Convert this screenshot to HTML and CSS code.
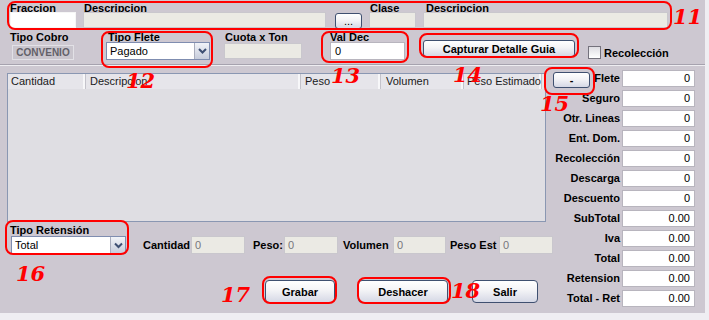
FILE: index.html
```html
<!DOCTYPE html>
<html lang="es">
<head>
  <meta charset="UTF-8">
  <title>Guia - Captura</title>
  <link rel="stylesheet" href="styles.css">
</head>
<body>

<div class="app">
  <!-- datos generales -->
  <div class="head">
    <div class="row-top">
      <div class="field w-fraccion">
        <span class="lbl">Fraccion</span>
        <div class="box plain"></div>
      </div>
      <div class="field w-desc">
        <span class="lbl pad1">Descripcion</span>
        <div class="box off"></div>
      </div>
      <button class="btn btn-dots">...</button>
      <div class="field w-clase">
        <span class="lbl pad1">Clase</span>
        <div class="box off"></div>
      </div>
      <div class="field w-desc2">
        <span class="lbl pad3">Descripcion</span>
        <div class="box off"></div>
      </div>
    </div>

    <div class="row-mid">
      <div class="field w-cobro">
        <span class="lbl">Tipo Cobro</span>
        <div class="cobro">CONVENIO</div>
      </div>
      <div class="field w-flete">
        <span class="lbl pad2">Tipo Flete</span>
        <div class="combo">
          <span class="combo-text">Pagado</span>
          <span class="combo-arrow"><svg width="13" height="14" viewBox="0 0 13 14"><polyline points="3,5 6.5,8.5 10,5" fill="none" stroke="#3d4f73" stroke-width="2"/></svg></span>
        </div>
      </div>
      <div class="field w-cuota">
        <span class="lbl pad1">Cuota x Ton</span>
        <div class="box off"></div>
      </div>
      <div class="field w-valdec">
        <span class="lbl">Val Dec</span>
        <div class="box val-dec">0</div>
      </div>
      <button class="btn btn-capturar">Capturar Detalle Guia</button>
      <label class="check"><span class="check-box"></span>Recolección</label>
    </div>
  </div>

  <div class="main">
    <div class="left">
      <div class="grid">
        <div class="grid-head">
          <span class="c-cant">Cantidad</span>
          <span class="c-desc">Descripcion</span>
          <span class="c-peso">Peso</span>
          <span class="c-vol">Volumen</span>
          <span class="c-est">Peso Estimado</span>
        </div>
      </div>

      <div class="ret-row">
        <div class="field w-ret">
          <span class="lbl">Tipo Retensión</span>
          <div class="combo combo-ret">
            <span class="combo-text">Total</span>
            <span class="combo-arrow"><svg width="13" height="15" viewBox="0 0 13 15"><polyline points="3,5.5 6.5,9 10,5.5" fill="none" stroke="#3d4f73" stroke-width="2"/></svg></span>
          </div>
        </div>
        <span class="lbl-in m-cant">Cantidad</span><div class="box off small w-54">0</div>
        <span class="lbl-in m-peso">Peso:</span><div class="box off small w-54">0</div>
        <span class="lbl-in m-vol">Volumen</span><div class="box off small w-53">0</div>
        <span class="lbl-in m-est">Peso Est</span><div class="box off small w-54">0</div>
      </div>

      <div class="actions">
        <button class="btn btn-act btn-grabar">Grabar</button>
        <button class="btn btn-act btn-deshacer">Deshacer</button>
        <button class="btn btn-act btn-salir">Salir</button>
      </div>
    </div>

    <div class="totals">
      <div class="t-lbl first"><button class="btn btn-minus">-</button>Flete</div><div class="box num-box">0</div>
      <div class="t-lbl">Seguro</div><div class="box num-box">0</div>
      <div class="t-lbl">Otr. Lineas</div><div class="box num-box">0</div>
      <div class="t-lbl">Ent. Dom.</div><div class="box num-box">0</div>
      <div class="t-lbl">Recolección</div><div class="box num-box">0</div>
      <div class="t-lbl">Descarga</div><div class="box num-box">0</div>
      <div class="t-lbl">Descuento</div><div class="box num-box">0</div>
      <div class="t-lbl">SubTotal</div><div class="box num-box">0.00</div>
      <div class="t-lbl">Iva</div><div class="box num-box">0.00</div>
      <div class="t-lbl">Total</div><div class="box num-box">0.00</div>
      <div class="t-lbl">Retension</div><div class="box num-box">0.00</div>
      <div class="t-lbl">Total - Ret</div><div class="box num-box">0.00</div>
    </div>
  </div>

  <!-- anotaciones en rojo -->
  <div class="mark mark-11"></div><span class="num num-11">11</span>
  <div class="mark mark-12"></div><span class="num num-12">12</span>
  <div class="mark mark-13"></div><span class="num num-13">13</span>
  <div class="mark mark-14"></div><span class="num num-14">14</span>
  <div class="mark mark-15"></div><span class="num num-15">15</span>
  <div class="mark mark-16"></div><span class="num num-16">16</span>
  <div class="mark mark-17"></div><span class="num num-17">17</span>
  <div class="mark mark-18"></div><span class="num num-18">18</span>
</div>

</body>
</html>
```

FILE: styles.css
```css
body {
  margin: 0;
  background: #efeef2;
  font-family: "Liberation Sans", Arial, sans-serif;
  font-size: 11px;
  color: #000;
}
.app {
  position: relative;
  width: 705px;
  height: 313px;
  background: #cdc8d1;
  overflow: hidden;
}

/* cabecera */
.head {
  height: 64px;
  border-bottom: 1px solid #a6a2ae;
  box-shadow: 0 1px 0 #eeedf1;
}
.row-top {
  display: flex;
  align-items: flex-start;
  padding-left: 10px;
}
.row-top .lbl {
  line-height: 17px;
}
.row-mid {
  display: flex;
  align-items: flex-start;
  padding-left: 10px;
  margin-top: 2px;
}
.field {
  display: flex;
  flex-direction: column;
}
.lbl {
  display: block;
  font-weight: bold;
  line-height: 12px;
  height: 12px;
  white-space: nowrap;
}
.pad1 { padding-left: 1px; }
.pad2 { padding-left: 2px; }
.pad3 { padding-left: 3px; }

.box {
  box-sizing: border-box;
  height: 16px;
  border: 1px solid #b8b5be;
  background: #fff;
}
.box.plain {
  border-color: #f6f6f6;
}
.box.off {
  background: #ebeae4;
  border-color: #c9c7cd;
}

.w-fraccion { width: 66px; }
.w-desc { width: 243px; margin-left: 7px; }
.w-clase { width: 47px; margin-left: 7px; }
.w-desc2 { width: 245px; margin-left: 7px; }

.btn {
  box-sizing: border-box;
  border: 1px solid #3f5070;
  border-radius: 3px;
  background: linear-gradient(#ffffff, #f3f3f6 45%, #d5d8e5);
  font-family: "Liberation Sans", Arial, sans-serif;
  font-size: 11px;
  font-weight: bold;
  color: #000;
  padding: 0;
  cursor: pointer;
}
.btn-dots {
  width: 27px;
  height: 16px;
  margin: 13px 0 0 9px;
  font-weight: normal;
  line-height: 12px;
}

.w-cobro { width: 66px; }
.cobro {
  box-sizing: border-box;
  width: 62px;
  height: 15px;
  margin: 2px 0 0 2px;
  border: 1px solid #e2e1e6;
  background: #c9c5cd;
  color: #626068;
  font-size: 10px;
  font-weight: bold;
  line-height: 13px;
  text-align: center;
}
.w-flete { width: 104px; margin-left: 30px; }
.combo {
  box-sizing: border-box;
  display: flex;
  height: 18px;
  margin-top: -1px;
  border: 1px solid #7f8db0;
  background: #fff;
}
.combo-text {
  flex: 1;
  padding-left: 3px;
  line-height: 16px;
}
.combo-arrow {
  box-sizing: border-box;
  width: 15px;
  border-left: 1px solid #a9adbd;
  background: linear-gradient(#f1f3f8, #c7cddc);
  display: flex;
  align-items: center;
  justify-content: center;
}
.w-cuota { width: 78px; margin-left: 14px; }
.w-valdec { width: 75px; margin-left: 28px; }
.val-dec {
  height: 18px;
  margin-top: -1px;
  padding-left: 4px;
  line-height: 16px;
}
.btn-capturar {
  width: 152px;
  height: 17px;
  margin: 9px 0 0 18px;
  line-height: 14px;
}
.check {
  display: flex;
  align-items: center;
  margin: 15px 0 0 13px;
  font-weight: bold;
}
.check-box {
  box-sizing: border-box;
  width: 13px;
  height: 13px;
  margin-right: 3px;
  border: 1px solid #74727c;
  background: linear-gradient(#dedde2, #ffffff);
}

/* cuerpo */
.main {
  display: flex;
}
.left {
  width: 553px;
}
.grid {
  box-sizing: border-box;
  width: 539px;
  height: 149px;
  margin: 8px 0 0 7px;
  border: 1px solid #8a97b2;
  background: #dfdee3;
}
.grid-head {
  display: flex;
  height: 15px;
  background: #e6e5ea;
  color: #1a1a1a;
}
.grid-head span {
  box-sizing: border-box;
  padding-left: 3px;
  line-height: 15px;
  border-right: 1px solid #c4c3cb;
  box-shadow: inset -2px 0 0 #f7f7f9;
  white-space: nowrap;
}
.c-cant { width: 78px; }
.c-desc { width: 215px; padding-left: 4px !important; }
.c-peso { width: 80px; padding-left: 4px !important; }
.c-vol { width: 83px; padding-left: 5px !important; }
.c-est { width: 78px; padding-left: 3px; }

.ret-row {
  display: flex;
  align-items: flex-end;
  margin-top: 2px;
}
.w-ret { width: 116px; padding-left: 10px; }
.combo-ret {
  margin-top: 0;
  margin-left: 1px;
  width: 115px;
}
.lbl-in {
  font-weight: bold;
  line-height: 18px;
  white-space: nowrap;
}
.m-cant { margin-left: 17px; width: 48px; }
.m-peso { margin-left: 8px; width: 31px; }
.m-vol { margin-left: 5px; width: 50px; }
.m-est { margin-left: 4px; width: 49px; }
.box.small {
  height: 18px;
  padding-left: 3px;
  line-height: 16px;
  color: #77767c;
}
.w-54 { width: 54px; }
.w-53 { width: 53px; }

.actions {
  display: flex;
  margin-top: 26px;
  padding-left: 265px;
}
.btn-act {
  height: 23px;
  border-radius: 4px;
}
.btn-grabar { width: 70px; }
.btn-deshacer { width: 90px; margin-left: 23px; }
.btn-salir { width: 66px; margin-left: 24px; }

/* totales */
.totals {
  display: grid;
  grid-template-columns: 67px 73px;
  grid-auto-rows: 17px;
  column-gap: 2px;
  row-gap: 3px;
  padding-top: 5px;
  align-content: start;
}
.t-lbl {
  font-weight: bold;
  text-align: right;
  line-height: 17px;
  white-space: nowrap;
}
.t-lbl.first {
  display: flex;
  justify-content: space-between;
  align-items: flex-start;
}
.btn-minus {
  width: 37px;
  height: 16px;
  margin-top: 2px;
  line-height: 12px;
}
.num-box {
  height: 17px;
  padding-right: 4px;
  text-align: right;
  line-height: 15px;
}

/* anotaciones */
.mark {
  position: absolute;
  box-sizing: border-box;
  border: 2px solid #f00;
  border-radius: 8px;
}
.num {
  position: absolute;
  font-family: "DejaVu Serif", "Liberation Serif", serif;
  font-size: 21px;
  font-weight: bold;
  font-style: italic;
  line-height: 21px;
  color: #f00;
}
.mark-11 { left: 7px; top: 1px; width: 665px; height: 29px; }
.num-11 { left: 673px; top: 6px; }
.mark-12 { left: 101px; top: 31px; width: 112px; height: 37px; }
.num-12 { left: 126px; top: 70px; }
.mark-13 { left: 321px; top: 31px; width: 88px; height: 32px; }
.num-13 { left: 331px; top: 65px; }
.mark-14 { left: 419px; top: 33px; width: 160px; height: 25px; }
.num-14 { left: 453px; top: 64px; }
.mark-15 { left: 544px; top: 67px; width: 51px; height: 28px; }
.num-15 { left: 540px; top: 93px; }
.mark-16 { left: 5px; top: 220px; width: 124px; height: 35px; }
.num-16 { left: 16px; top: 263px; }
.mark-17 { left: 262px; top: 276px; width: 75px; height: 28px; }
.num-17 { left: 221px; top: 284px; }
.mark-18 { left: 357px; top: 277px; width: 94px; height: 27px; }
.num-18 { left: 451px; top: 280px; }
```
